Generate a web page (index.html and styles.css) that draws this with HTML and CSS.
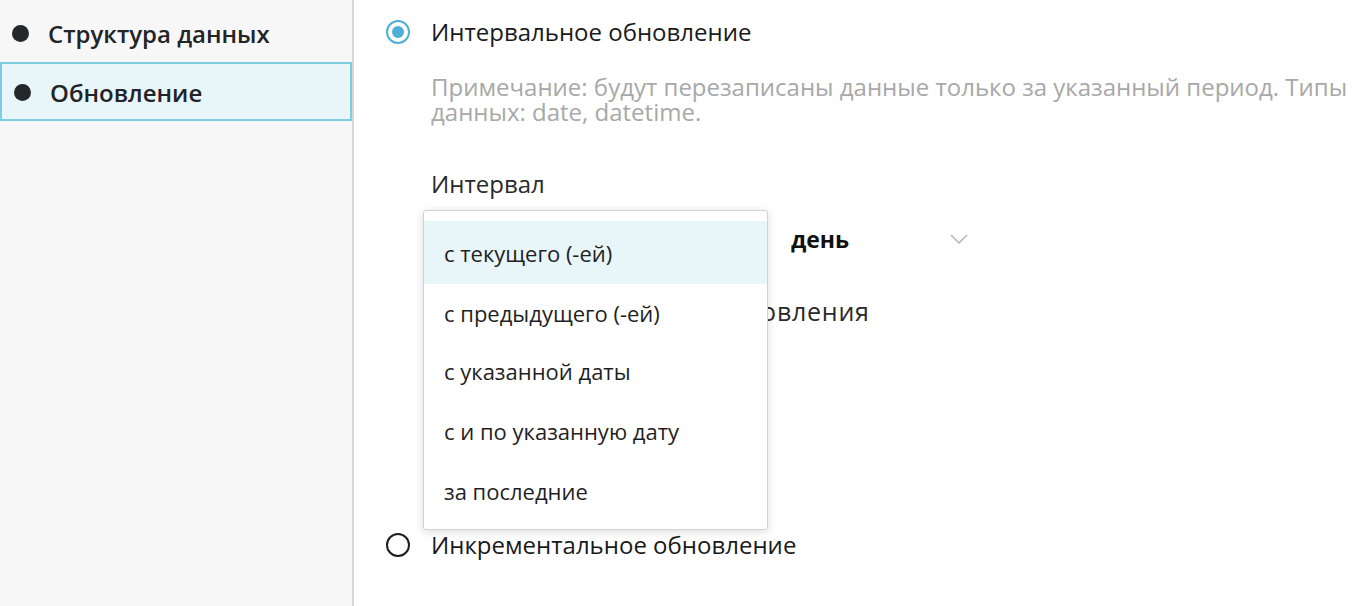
FILE: index.html
```html
<!DOCTYPE html>
<html lang="ru">
<head>
<meta charset="utf-8">
<link rel="stylesheet" href="styles.css">
</head>
<body>
<div class="page">
  <aside class="sidebar">
    <div class="nav-item"><span class="dot"></span><span>Структура данных</span></div>
    <div class="nav-item active"><span class="dot"></span><span>Обновление</span></div>
  </aside>
  <main class="main">
    <div class="radio-row">
      <span class="radio checked"></span>
      <span>Интервальное обновление</span>
    </div>
    <p class="note">Примечание: будут перезаписаны данные только за указанный период. Типы<br>данных: date, datetime.</p>
    <div class="field-label">Интервал</div>
    <div class="select-row">
      <div class="select first"><span>с текущего (-ей)</span></div>
      <div class="select second">
        <span class="value">день</span>
        <svg class="chevron" width="18" height="10" viewBox="0 0 18 10"><polyline points="1,1 9,9 17,1" fill="none" stroke="#b3b8c4" stroke-width="1.6"/></svg>
      </div>
    </div>
    <div class="field-label second-label">Дата начала периода обновления</div>
    <div class="radio-row incremental">
      <span class="radio"></span>
      <span>Инкрементальное обновление</span>
    </div>
    <ul class="dropdown">
      <li class="option hover">с текущего (-ей)</li>
      <li class="option">с предыдущего (-ей)</li>
      <li class="option">с указанной даты</li>
      <li class="option">с и по указанную дату</li>
      <li class="option">за последние</li>
    </ul>
  </main>
</div>
</body>
</html>
```
FILE: styles.css
```css
html, body {
  margin: 0;
  padding: 0;
  background: #ffffff;
  font-family: "Open Sans", "Noto Sans", sans-serif;
  color: #1c1c1c;
}
.page {
  display: flex;
  height: 606px;
  overflow: hidden;
}
.sidebar {
  width: 352px;
  flex: 0 0 352px;
  background: #f7f7f7;
  border-right: 2px solid #d7d7d7;
  padding-top: 3px;
  box-sizing: content-box;
}
.nav-item {
  display: flex;
  align-items: center;
  gap: 19px;
  height: 59px;
  box-sizing: border-box;
  padding-left: 10px;
  padding-top: 1px;
  border: 2px solid transparent;
  font-size: 24px;
  font-weight: 600;
  color: #222426;
}
.nav-item .dot {
  margin-top: 1px;
}
.nav-item.active {
  background: #e8f5f9;
  border-color: #7ecde1;
  padding-left: 12px;
}
.dot {
  width: 17px;
  height: 17px;
  border-radius: 50%;
  background: #25272a;
  flex: 0 0 17px;
}
.main {
  position: relative;
  flex: 1;
  padding: 16px 0 0 32px;
}
.radio-row {
  display: flex;
  align-items: center;
  gap: 21px;
  height: 30px;
  font-size: 24px;
  color: #1a1a1a;
}
.radio-row .radio {
  margin-top: 2px;
}
.radio {
  width: 24px;
  height: 24px;
  box-sizing: border-box;
  border-radius: 50%;
  border: 2px solid #1d1d1d;
  flex: 0 0 24px;
  display: flex;
  align-items: center;
  justify-content: center;
}
.radio.checked {
  border-color: #4eafd7;
}
.radio.checked::after {
  content: "";
  width: 12px;
  height: 12px;
  border-radius: 50%;
  background: #4eafd7;
}
.note {
  margin: 28px 0 0 45px;
  font-size: 24px;
  line-height: 25px;
  color: #a8a8a8;
  white-space: nowrap;
}
.field-label {
  margin: 45px 0 0 45px;
  font-size: 24px;
  line-height: 30px;
  color: #2a2a2a;
}
.select-row {
  display: flex;
  gap: 14px;
  margin: 18px 0 0 45px;
  height: 44px;
}
.select {
  display: flex;
  align-items: center;
  font-size: 23px;
  box-sizing: border-box;
}
.select.first {
  width: 330px;
  padding-left: 14px;
}
.select.second {
  width: 215px;
  padding-left: 16px;
  justify-content: space-between;
  padding-right: 22px;
}
.select .value {
  font-weight: 700;
  color: #111;
}
.chevron {
  display: block;
}
.second-label {
  margin-top: 35px;
  font-size: 25px;
  letter-spacing: 0.75px;
}
.incremental {
  margin-top: 203px;
}
.dropdown {
  position: absolute;
  left: 69px;
  top: 210px;
  width: 345px;
  box-sizing: border-box;
  margin: 0;
  padding: 10px 0 8px;
  list-style: none;
  background: #fff;
  border: 1px solid #d2d2d2;
  border-radius: 3px;
  box-shadow: 0 2px 10px rgba(0, 0, 0, 0.14);
}
.option {
  height: 60px;
  display: flex;
  align-items: center;
  padding-left: 20px;
  font-size: 22px;
  color: #1f1f1f;
}
.option.hover {
  height: 63px;
  padding-top: 1px;
  box-sizing: border-box;
  background: #e8f5f9;
}
.option.hover + .option {
  height: 57px;
  box-sizing: border-box;
}
```
